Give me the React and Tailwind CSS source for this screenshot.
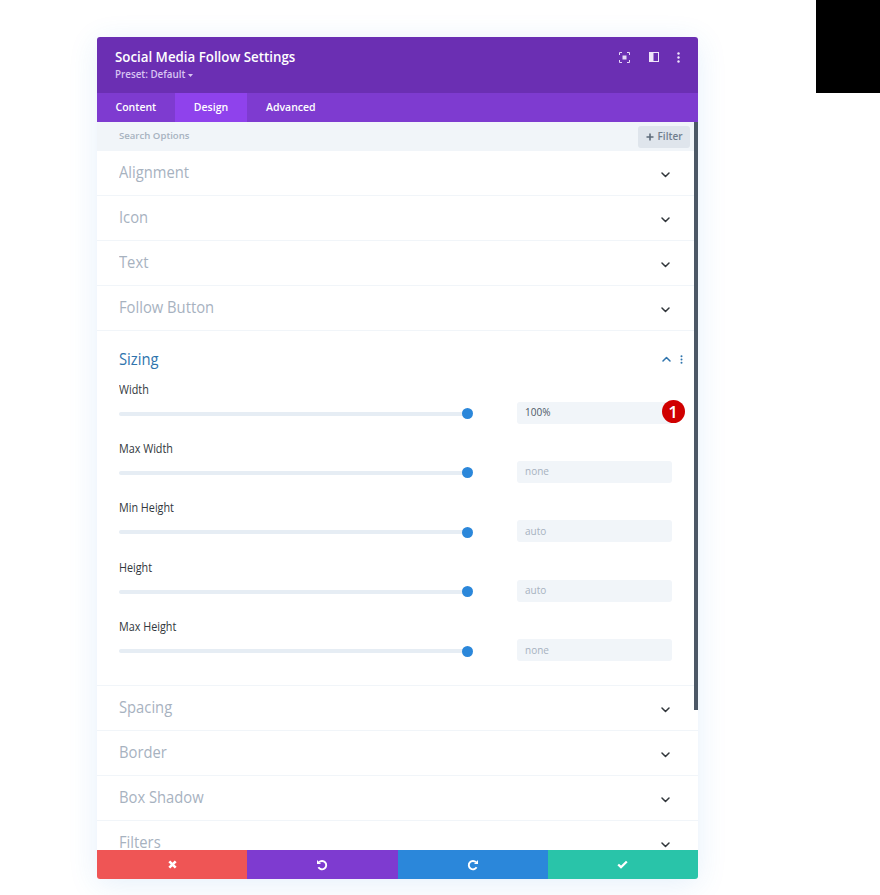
import React from "react";

function Chevron({ up = false, color = "#32373c" }) {
  return (
    <svg width="9" height="6" viewBox="0 0 9 6" fill="none" className={up ? "rotate-180" : ""}>
      <path d="M1 1 4.5 4.5 8 1" stroke={color} strokeWidth="1.5" strokeLinecap="round" strokeLinejoin="round" />
    </svg>
  );
}

function Closed({ title, h = "h-[45px]" }) {
  return (
    <div className={`${h} shrink-0 border-b border-[#f1f5f9] flex items-center justify-between pl-[22px] pr-[28px]`}>
      <span className="relative -top-[0.5px] text-[16.4px] leading-none text-[#a7b2bf] origin-left scale-x-[0.9]">{title}</span>
      <span className="relative top-[2px]">
        <Chevron />
      </span>
    </div>
  );
}

function Field({ label, value, active = false, className = "" }) {
  return (
    <div className={`relative h-[59.4px] shrink-0 ${className}`}>
      <div className="relative -top-[1px] w-fit text-[12px] leading-[16px] text-[#32373c] origin-left scale-x-[0.9]">{label}</div>
      <div className="flex items-center mt-[4px] h-[22px]">
        <div className="relative w-[348px] h-[4px] rounded-full bg-[#e6edf4]">
          <div className="absolute -right-[5.5px] -top-[3.5px] w-[11px] h-[11px] rounded-full bg-[#2b87da]" />
        </div>
        <div
          className={`relative -top-[1px] ml-[50px] w-[155px] h-[22px] rounded-[3px] bg-[#f1f5f9] flex items-center pl-[8px] text-[10px] font-medium ${
            active ? "text-[#4c5866]" : "text-[#a7b2bf]"
          }`}
        >
          {value}
        </div>
      </div>
    </div>
  );
}

export default function App() {
  return (
    <div className="relative w-[880px] h-[895px] bg-white overflow-hidden font-['Open_Sans',sans-serif]">
      <div className="absolute top-0 right-0 w-[64px] h-[93px] bg-black" />

      <div className="absolute left-[97px] top-[37px] w-[601px] h-[842px] rounded-[3px] flex flex-col shadow-[0_5px_30px_rgba(43,135,218,0.12)]">
        <div className="h-[56px] shrink-0 rounded-t-[3px] bg-[#6b2fb3] flex justify-between pl-[18px] pr-[18px]">
          <div>
            <div className="mt-[11px] w-fit text-[14px] leading-[18px] font-semibold text-white origin-left scale-x-[0.95]">Social Media Follow Settings</div>
            <div className="mt-[2px] flex items-center gap-[3px] text-[9.8px] leading-[14px] font-semibold text-[#d9c5f2]">
              Preset: Default
              <svg width="5" height="3" viewBox="0 0 5 3"><path d="M0 0h5L2.5 3z" fill="#d9c5f2" /></svg>
            </div>
          </div>
          <div className="flex items-center h-[40px]">
            <svg width="11" height="11" viewBox="0 0 11 11" fill="none" stroke="#e6d9f7" strokeWidth="1">
              <path d="M.5 3V.5H3M8 .5h2.5V3M10.5 8v2.5H8M3 10.5H.5V8" />
              <rect x="3.5" y="3.5" width="4" height="4" fill="#e6d9f7" stroke="none" />
            </svg>
            <svg width="10" height="10" viewBox="0 0 10 10" className="ml-[18.5px]">
              <rect x="0.5" y="0.5" width="9" height="9" fill="none" stroke="#efe6fa" strokeWidth="1" />
              <rect x="1" y="1" width="3.5" height="8" fill="#efe6fa" />
            </svg>
            <svg width="3" height="11" viewBox="0 0 3 11" className="ml-[18.5px]">
              <circle cx="1.5" cy="1.5" r="1.2" fill="#efe6fa" />
              <circle cx="1.5" cy="5.5" r="1.2" fill="#efe6fa" />
              <circle cx="1.5" cy="9.5" r="1.2" fill="#efe6fa" />
            </svg>
          </div>
        </div>

        <div className="h-[29px] shrink-0 bg-[#7e3bd0] flex text-[10.5px] font-semibold text-white">
          <div className="w-[78px] pl-[18.5px] flex items-center">Content</div>
          <div className="w-[72px] bg-[#8f42ec] flex items-center justify-center">Design</div>
          <div className="pl-[19px] flex items-center">Advanced</div>
        </div>

        <div className="relative flex-1 min-h-0 overflow-hidden bg-white flex flex-col">
          <div className="h-[29px] shrink-0 bg-[#f1f5f9] flex items-center justify-between pl-[22px] pr-[8px]">
            <span className="text-[9.6px] font-semibold text-[#a7b2bf]">Search Options</span>
            <div className="w-[52px] h-[22px] rounded-[3px] bg-[#dfe5ec] flex items-center justify-center gap-[4px] text-[10px] font-semibold text-[#6f7d8c]">
              <svg width="8" height="8" viewBox="0 0 8 8"><path d="M4 .5v7M.5 4h7" stroke="#5d6b7a" strokeWidth="1.6" /></svg>
              Filter
            </div>
          </div>

          <Closed title="Alignment" h="h-[44.5px]" />
          <Closed title="Icon" />
          <Closed title="Text" />
          <Closed title="Follow Button" />

          <div className="h-[355px] shrink-0 border-b border-[#f1f5f9] pl-[22px] pr-[26px]">
            <div className="flex items-center justify-between h-[57px]">
              <span className="text-[16.4px] leading-none text-[#2f74ad] origin-left scale-x-[0.9]">Sizing</span>
              <div className="flex items-center gap-[9px] -mr-[11px]">
                <Chevron up color="#2f74ad" />
                <svg width="3" height="9" viewBox="0 0 3 9">
                  <circle cx="1.5" cy="1.2" r="1" fill="#2f74ad" />
                  <circle cx="1.5" cy="4.5" r="1" fill="#2f74ad" />
                  <circle cx="1.5" cy="7.8" r="1" fill="#2f74ad" />
                </svg>
              </div>
            </div>
            <Field label="Width" value="100%" active className="-mt-[5px]" />
            <Field label="Max Width" value="none" />
            <Field label="Min Height" value="auto" />
            <Field label="Height" value="auto" />
            <Field label="Max Height" value="none" />
          </div>

          <Closed title="Spacing" />
          <Closed title="Border" />
          <Closed title="Box Shadow" />
          <Closed title="Filters" />

          <div className="absolute right-0 top-0 w-[4px] h-[588px] bg-[#4c5866]" />
          <div className="absolute left-[564.5px] top-[277.5px] w-[23px] h-[23px] rounded-full bg-[#d00000] text-white text-[17px] leading-none font-semibold flex items-center justify-center">
            1
          </div>
        </div>

        <div className="h-[29px] shrink-0 rounded-b-[3px] overflow-hidden flex">
          <div className="flex-1 bg-[#ef5555] flex items-center justify-center">
            <svg width="9" height="9" viewBox="0 0 9 9"><path d="M1.3 1.3l6.4 6.4M7.7 1.3 1.3 7.7" stroke="#fff" strokeWidth="2.6" /></svg>
          </div>
          <div className="flex-1 bg-[#7e3bd0] flex items-center justify-center">
            <svg width="12" height="12" viewBox="0 0 12 12" fill="none">
              <path d="M3 3.2A4.2 4.2 0 1 1 2.4 8.3" stroke="#fff" strokeWidth="1.9" />
              <path d="M1 1v4h4z" fill="#fff" />
            </svg>
          </div>
          <div className="flex-1 bg-[#2b87da] flex items-center justify-center">
            <svg width="12" height="12" viewBox="0 0 12 12" fill="none">
              <path d="M9 3.2A4.2 4.2 0 1 0 9.6 8.3" stroke="#fff" strokeWidth="1.9" />
              <path d="M11 1v4H7z" fill="#fff" />
            </svg>
          </div>
          <div className="flex-1 bg-[#29c4a9] flex items-center justify-center">
            <svg width="11" height="9" viewBox="0 0 11 9" fill="none"><path d="M1.2 4.5 4 7.2 9.8 1.5" stroke="#fff" strokeWidth="2.3" /></svg>
          </div>
        </div>
      </div>
    </div>
  );
}
